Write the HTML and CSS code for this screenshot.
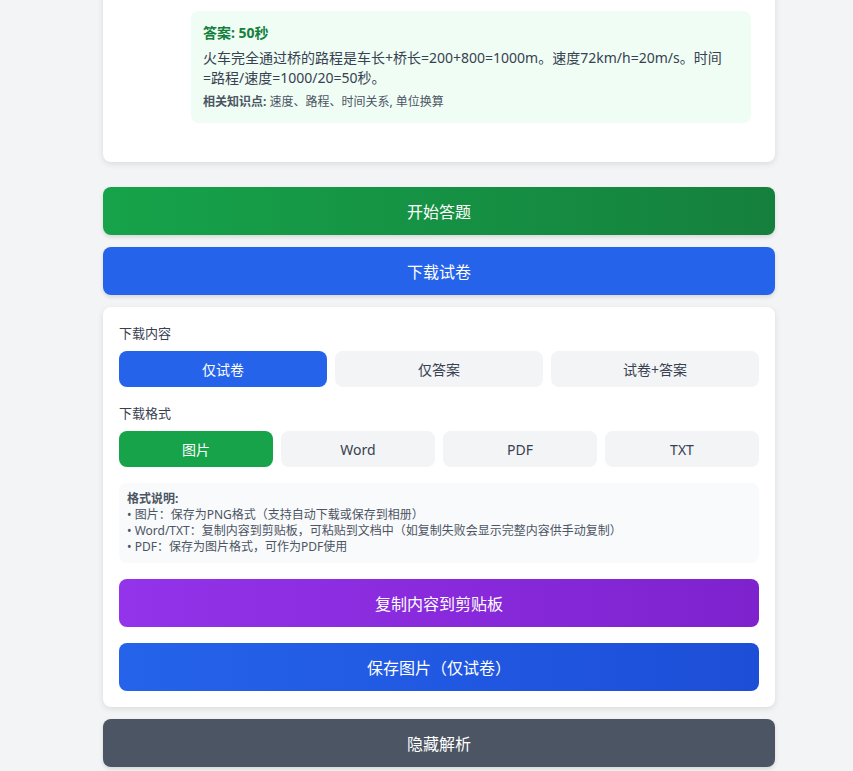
FILE: index.html
```html
<!DOCTYPE html>
<html>
<head>
    <meta charset="utf-8">
    <title>试卷解析</title>
    <link rel="stylesheet" href="styles.css">
</head>
<body>

<div class="page">
    <div class="card questionCard">
        <div class="answerBox">
            <div class="answerTitle">答案: 50秒</div>
            <div class="answerText">火车完全通过桥的路程是车长+桥长=200+800=1000m。速度72km/h=20m/s。时间<br>=路程/速度=1000/20=50秒。</div>
            <div class="answerPoints"><b>相关知识点:</b> 速度、路程、时间关系, 单位换算</div>
        </div>
    </div>

    <button class="bigBtn btnGreen">开始答题</button>
    <button class="bigBtn btnBlue">下载试卷</button>

    <div class="card downloadPanel">
        <div class="fieldLabel">下载内容</div>
        <div class="optionRow three">
            <button class="optBtn activeBlue">仅试卷</button>
            <button class="optBtn">仅答案</button>
            <button class="optBtn">试卷+答案</button>
        </div>

        <div class="fieldLabel">下载格式</div>
        <div class="optionRow four">
            <button class="optBtn activeGreen">图片</button>
            <button class="optBtn">Word</button>
            <button class="optBtn">PDF</button>
            <button class="optBtn">TXT</button>
        </div>

        <div class="formatNote">
            <b>格式说明:</b><br>
            • 图片：保存为PNG格式（支持自动下载或保存到相册）<br>
            • Word/TXT：复制内容到剪贴板，可粘贴到文档中（如复制失败会显示完整内容供手动复制）<br>
            • PDF：保存为图片格式，可作为PDF使用
        </div>

        <button class="bigBtn btnPurple">复制内容到剪贴板</button>
        <button class="bigBtn btnBlueGrad last">保存图片（仅试卷）</button>
    </div>

    <button class="bigBtn btnGray">隐藏解析</button>
</div>

</body>
</html>
```

FILE: styles.css
```css
body {
    margin: 0;
    padding-left: 25px;
    background: #f3f4f6;
    font-family: "Noto Sans", "Noto Sans CJK SC", sans-serif;
    color: #1f2937;
}
.page {
    width: 672px;
    margin: 0 auto;
}
.card {
    background: #fff;
    border-radius: 8px;
    box-shadow: 0 2px 6px rgba(0, 0, 0, 0.1);
}
.questionCard {
    margin-top: -13px;
    padding: 24px 24px 23px 24px;
    margin-bottom: 25px;
}
.answerBox {
    margin-left: 64px;
    background: #f0fdf4;
    border-radius: 8px;
    padding: 12px 12px 13px 12px;
    margin-bottom: 16px;
}
.answerTitle {
    font-size: 14px;
    line-height: 20px;
    font-weight: bold;
    color: #15803d;
    margin-bottom: 5px;
}
.answerText {
    font-size: 14px;
    line-height: 20px;
    color: #374151;
    margin-bottom: 6px;
}
.answerPoints {
    font-size: 12px;
    line-height: 16px;
    color: #4b5563;
}
.bigBtn {
    display: block;
    width: 100%;
    height: 48px;
    border: none;
    border-radius: 8px;
    color: #fff;
    font-family: inherit;
    font-size: 16px;
    margin-bottom: 12px;
    box-shadow: 0 2px 4px rgba(0, 0, 0, 0.12);
}
.btnGreen {
    background: linear-gradient(90deg, #16a34a, #15803d);
}
.btnBlue {
    background: #2563eb;
}
.btnPurple {
    background: linear-gradient(90deg, #9333ea, #7e22ce);
    margin-bottom: 16px;
    box-shadow: none;
}
.btnBlueGrad {
    background: linear-gradient(90deg, #2563eb, #1d4ed8);
    box-shadow: none;
}
.btnGray {
    background: #4b5563;
}
.downloadPanel {
    padding: 16px;
    margin-bottom: 12px;
}
.last {
    margin-bottom: 0;
}
.fieldLabel {
    font-size: 13px;
    line-height: 20px;
    color: #374151;
    margin-bottom: 8px;
}
.optionRow {
    display: grid;
    gap: 8px;
    margin-bottom: 16px;
}
.optionRow.three {
    grid-template-columns: repeat(3, 1fr);
}
.optionRow.four {
    grid-template-columns: repeat(4, 1fr);
}
.optBtn {
    height: 36px;
    border: none;
    border-radius: 8px;
    background: #f3f4f6;
    color: #374151;
    font-family: inherit;
    font-size: 14px;
}
.optBtn.activeBlue {
    background: #2563eb;
    color: #fff;
}
.optBtn.activeGreen {
    background: #16a34a;
    color: #fff;
}
.formatNote {
    background: #f9fafb;
    border-radius: 8px;
    padding: 8px;
    font-size: 12px;
    line-height: 16px;
    color: #4b5563;
    margin-bottom: 16px;
}
```
